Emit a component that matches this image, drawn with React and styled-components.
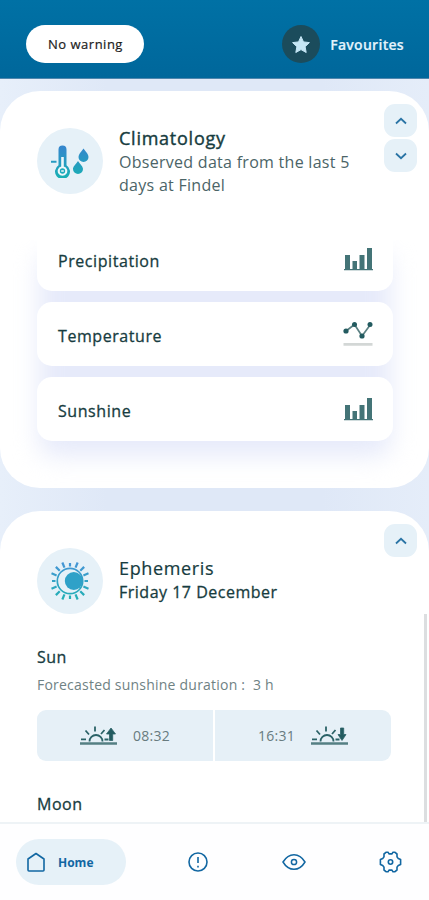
import React from "react";
import styled, { createGlobalStyle } from "styled-components";

const GlobalStyle = createGlobalStyle`
  * { box-sizing: border-box; }
  html, body { margin: 0; height: 100%; overflow: hidden; }
  body { font-family: "Open Sans", "Noto Sans", sans-serif; color: #173c40; }
  svg { display: block; flex: none; }
`;

const Screen = styled.div`
  width: 429px;
  height: 900px;
  display: flex;
  flex-direction: column;
  overflow: hidden;
  background: #fff;
`;

const Header = styled.header`
  flex: none;
  height: 79px;
  padding: 10px 25px 0 26px;
  display: flex;
  align-items: center;
  justify-content: space-between;
  background: linear-gradient(#0071a5, #00679b);
  border-bottom: 1px solid #4f86ad;
`;

const WarningPill = styled.button`
  width: 118px;
  height: 38px;
  padding: 0 0 0 1px;
  border: 0;
  border-radius: 19px;
  background: #fff;
  color: #1c1c1c;
  font: 500 13px/38px "Open Sans", sans-serif;
  letter-spacing: 0.5px;
  -webkit-text-stroke: 0.2px currentColor;
`;

const Favourites = styled.div`
  display: flex;
  align-items: center;
  gap: 10px;
  color: #e3f3fc;
  font-size: 14px;
  font-weight: 600;
  letter-spacing: 0.3px;
  -webkit-text-stroke: 0.2px currentColor;
`;

const StarBadge = styled.span`
  width: 38px;
  height: 38px;
  border-radius: 50%;
  display: grid;
  place-items: center;
  background: #1b4c5c;
`;

const Feed = styled.main`
  flex: 1;
  min-height: 0;
  padding-top: 12px;
  display: flex;
  flex-direction: column;
  gap: 23px;
  overflow: hidden;
  background: linear-gradient(90deg, #e7effa, #dfe8f7 25%, #dfe8f7 75%, #e5edf9);
`;

const Card = styled.section`
  flex: none;
  height: ${(p) => p.$height}px;
  border-radius: ${(p) => (p.$open ? "40px 40px 0 0" : "40px")};
  background: #fff;
  overflow: hidden;
`;

const CardHead = styled.div`
  height: ${(p) => p.$height}px;
  padding: 13px 12px 0 37px;
  display: flex;
  align-items: flex-start;
`;

const IconDisc = styled.div`
  width: 66px;
  height: 66px;
  margin-top: 24px;
  border-radius: 50%;
  display: grid;
  place-items: center;
  background: #e6f1f8;
`;

const Titles = styled.div`
  flex: 1;
  padding: ${(p) => p.$top}px 0 0 16px;
`;

const Title = styled.h2`
  margin: 0;
  font-size: 18px;
  line-height: 25px;
  font-weight: 500;
  letter-spacing: ${(p) => p.$track || 0}px;
  -webkit-text-stroke: ${(p) => p.$stroke}px currentColor;
`;

const Subtitle = styled.p`
  margin: 0;
  font-size: 16px;
  line-height: 23px;
  font-weight: ${(p) => (p.$strong ? 500 : 400)};
  color: ${(p) => (p.$strong ? "#173c40" : "#4b6467")};
  letter-spacing: ${(p) => p.$track || 0}px;
  -webkit-text-stroke: ${(p) => (p.$strong ? 0.3 : 0)}px currentColor;
  white-space: nowrap;
`;

const Steppers = styled.div`
  display: flex;
  flex-direction: column;
  gap: 2px;
`;

const StepButton = styled.button`
  width: 33px;
  height: 33px;
  padding: 0;
  border: 0;
  border-radius: 11px;
  display: grid;
  place-items: center;
  background: #e6f1f8;
`;

const ListViewport = styled.div`
  height: 248px;
  overflow: hidden;
  display: flex;
  flex-direction: column;
  justify-content: flex-end;
  padding: 0 36px 47px 37px;
`;

const RowList = styled.div`
  flex: none;
  display: flex;
  flex-direction: column;
  gap: 11px;
  position: relative;
  isolation: isolate;

  &::before {
    content: "";
    position: absolute;
    z-index: -1;
    inset: 26px 2px -15px;
    border-radius: 15px;
    background: #e6eafa;
    filter: blur(12px);
  }
`;

const Row = styled.div`
  height: 64px;
  padding: 0 20px 0 21px;
  display: flex;
  align-items: center;
  justify-content: space-between;
  border-radius: 15px;
  background: #fff;
`;

const RowLabel = styled.span`
  padding-top: 4px;
  font-size: 16px;
  font-weight: 500;
  letter-spacing: 0.57px;
  -webkit-text-stroke: 0.3px currentColor;
`;

const Details = styled.div`
  display: flex;
`;

const DetailBody = styled.div`
  flex: 1;
  padding: 31px 0 0 37px;
`;

const ScrollThumb = styled.div`
  width: 3px;
  height: 210px;
  margin-right: 2px;
  background: #dcdee0;
`;

const SectionName = styled.h3`
  margin: 0;
  font-size: 16px;
  line-height: 24px;
  font-weight: 500;
  letter-spacing: 0.5px;
  -webkit-text-stroke: 0.3px currentColor;
`;

const Forecast = styled.p`
  margin: 7px 0 16px;
  font-size: 14px;
  line-height: 18px;
  color: #6f8284;
  white-space: pre;
  letter-spacing: 0.22px;
`;

const Times = styled.div`
  width: 354px;
  height: 51px;
  margin-bottom: 31px;
  display: grid;
  grid-template-columns: 176px 176px;
  gap: 2px;
  border-radius: 9px;
  overflow: hidden;
`;

const TimeCell = styled.div`
  display: flex;
  align-items: center;
  justify-content: center;
  gap: 16px;
  background: #e6f0f7;
  color: #687b7f;
  font-size: 14px;
  letter-spacing: 0.3px;
`;

const Nav = styled.nav`
  flex: none;
  height: 78px;
  padding: 0 27px 0 16px;
  display: flex;
  align-items: center;
  justify-content: space-between;
  border-top: 2px solid #eef3f6;
  background: #fefeff;
  color: #1267a2;
`;

const Shortcuts = styled.div`
  width: 215px;
  display: flex;
  align-items: center;
  justify-content: space-between;
`;

const HomeTab = styled.a`
  width: 110px;
  height: 46px;
  padding-left: 9px;
  display: flex;
  align-items: center;
  gap: 11px;
  border-radius: 23px;
  background: #e6f1f8;
  font-size: 12px;
  font-weight: 700;
`;

const Chevron = ({ down }) => (
  <svg width="12" height="8" viewBox="0 0 12 8" fill="none" stroke="#2a74a5" strokeWidth="1.8">
    <path d={down ? "M1 1.5L6 6.2L11 1.5" : "M1 6.5L6 1.8L11 6.5"} />
  </svg>
);

const Bars = () => (
  <svg width="29" height="24" viewBox="0 0 29 24" fill="#447477">
    <path d="M1 8h5v14H1zM8.500 14h4.500v8h-4.500zM15.500 8h5v14h-5zM23 1h5v21h-5zM0 22h29v1.200H0z" />
  </svg>
);

const Line = () => (
  <svg width="30" height="26" viewBox="0 0 30 26">
    <path d="M3 10L11.500 3.500L19 15L27.500 3.500" fill="none" stroke="#5b8082" strokeWidth="1.700" />
    <g fill="#235b60">
      <circle cx="3" cy="10" r="2.600" />
      <circle cx="11.500" cy="3.500" r="2.500" />
      <circle cx="19" cy="15" r="2.600" />
      <circle cx="27" cy="3.500" r="2.500" />
    </g>
    <path d="M.5 22h29v2.800H.5z" fill="#d3d7d6" />
  </svg>
);

const Thermometer = () => (
  <svg width="38" height="34" viewBox="0 0 38 34">
    <defs>
      <linearGradient id="climate" x1="0" y1="0" x2="0" y2="34" gradientUnits="userSpaceOnUse">
        <stop offset="0.1" stopColor="#3587cd" />
        <stop offset="1" stopColor="#18b0b4" />
      </linearGradient>
    </defs>
    <g fill="url(#climate)">
      <path d="M7.500 5.500a4 4 0 0 1 8 0v15.700a7.500 7.500 0 1 1-8 0z" />
      <path d="M0 16.800h5.500v2H0z" />
      <path d="M32.500 4.500c3 4 5 6 5 8.500a5 5 0 0 1-10 0c0-2.500 2-4.500 5-8.500z" />
      <path d="M27 17c3 4 5 5.800 5 8a5 5 0 0 1-10 0c0-2.200 2-4 5-8z" />
    </g>
    <path d="M10.200 13h2.600v9.400a4.800 4.800 0 1 1-2.600 0z" fill="#eef7fa" />
    <circle cx="11.500" cy="27" r="2.700" fill="#1da9bb" />
    <path d="M10.200 26.300h2.600v1.400h-2.600z" fill="#eef7fa" />
  </svg>
);

const Eclipse = () => (
  <svg width="40" height="40" viewBox="-20 -20 40 40">
    <defs>
      <linearGradient id="eclipse" x1="0" y1="-19" x2="0" y2="19" gradientUnits="userSpaceOnUse">
        <stop offset="0" stopColor="#4594d6" />
        <stop offset="1" stopColor="#22b0b4" />
      </linearGradient>
    </defs>
    <circle r="12.700" fill="none" stroke="url(#eclipse)" strokeWidth="1.700" />
    <circle cx="3.800" r="9" fill="#2fa1c8" />
    <g stroke="url(#eclipse)" strokeWidth="2.200">
      {Array.from({ length: 16 }, (_, i) => {
        const a = ((i * 360) / 16) * (Math.PI / 180);
        const s = Math.sin(a);
        const c = -Math.cos(a);
        const end = i % 4 === 0 ? 18 : 20;
        return <line key={i} x1={s * 14.5} y1={c * 14.5} x2={s * end} y2={c * end} />;
      })}
    </g>
  </svg>
);

const SunHorizon = ({ down }) => (
  <svg width="37" height="20" viewBox="0 0 37 20" fill="none" stroke="#2b6267" strokeWidth="1.800">
    <path d="M9.500 15.500a6.500 6.500 0 0 1 13 0M1 13.300h5M5.500 4.500l3.500 4M15 .5v5M24.500 4L21 8M24.500 13.500h4" />
    <path d="M0 17.500h37" stroke="#547f83" strokeWidth="2.500" />
    <path
      d={down ? "M29.500 2h3.200v6.500H35L31 14.500L27 8.500h2.500z" : "M29.500 14.500h3.200V8H35.500L31 2L26.500 8h3z"}
      fill="#235b60"
      strokeWidth=".8"
    />
  </svg>
);

const Star = () => (
  <svg width="20" height="19" viewBox="0 0 20 19" fill="#c5e6f5" stroke="#c5e6f5" strokeLinejoin="round">
    <path d="M10 1.500l2.500 5.400 5.900.7-4.300 4.100 1.100 5.800L10 14.600l-5.200 2.900 1.100-5.800L1.600 7.600l5.900-.7z" />
  </svg>
);

const HomeIcon = () => (
  <svg width="22" height="20" viewBox="0 0 22 20" fill="none" stroke="currentColor" strokeWidth="1.600" strokeLinejoin="round">
    <path d="M11 1.500L19 7v11a1 1 0 0 1-1 1H4a1 1 0 0 1-1-1V7z" />
  </svg>
);

const AlertIcon = () => (
  <svg width="22" height="22" viewBox="0 0 22 22" fill="none" stroke="currentColor" strokeWidth="1.600">
    <circle cx="11" cy="11" r="9" />
    <path d="M11 6v6M11 14.800v1.700" />
  </svg>
);

const EyeIcon = () => (
  <svg width="24" height="18" viewBox="0 0 24 18" fill="none" stroke="currentColor" strokeWidth="1.500">
    <path d="M1 9C4 4 7.500 1.700 12 1.700S20 4 23 9C20 14 16.500 16.300 12 16.300S4 14 1 9z" />
    <circle cx="12" cy="9" r="2.600" />
  </svg>
);

const GearIcon = () => (
  <svg width="23" height="22" viewBox="0 0 23 22" fill="none" stroke="currentColor" strokeWidth="1.600" strokeLinejoin="round">
    <path d="M7.300 1.200H9L10 2.900H13L14 1.200H15.700L18 3V5.800L19.300 7.600L21.600 8.600V13.400L19.300 14.400L18 16.200V19L15.700 20.800H14L13 19.100H10L9 20.800H7.300L5 19V16.200L3.700 14.400L1.400 13.400V8.600L3.700 7.600L5 5.800V3z" />
    <circle cx="11.500" cy="11" r="2.200" />
  </svg>
);

const rows = [
  { label: "Precipitation", icon: <Bars /> },
  { label: "Temperature", icon: <Line /> },
  { label: "Sunshine", icon: <Bars /> },
];

export default function App() {
  return (
    <Screen>
      <GlobalStyle />
      <Header>
        <WarningPill>No warning</WarningPill>
        <Favourites>
          <StarBadge><Star /></StarBadge>
          <span>Favourites</span>
        </Favourites>
      </Header>
      <Feed>
        <Card $height={397}>
          <CardHead $height={149}>
            <IconDisc><Thermometer /></IconDisc>
            <Titles $top={22}>
              <Title $track={0.75} $stroke={0.4}>Climatology</Title>
              <Subtitle $track={0.28}>Observed data from the last 5<br />days at Findel</Subtitle>
            </Titles>
            <Steppers>
              <StepButton aria-label="Move up"><Chevron /></StepButton>
              <StepButton aria-label="Move down"><Chevron down /></StepButton>
            </Steppers>
          </CardHead>
          <ListViewport>
            <RowList>
              {rows.map((r) => (
                <Row key={r.label}>
                  <RowLabel>{r.label}</RowLabel>
                  {r.icon}
                </Row>
              ))}
            </RowList>
          </ListViewport>
        </Card>
        <Card $height={420} $open>
          <CardHead $height={103}>
            <IconDisc><Eclipse /></IconDisc>
            <Titles $top={32}>
              <Title $track={0.65} $stroke={0.2}>Ephemeris</Title>
              <Subtitle $strong $track={0.5}>Friday 17 December</Subtitle>
            </Titles>
            <StepButton aria-label="Move up"><Chevron /></StepButton>
          </CardHead>
          <Details>
            <DetailBody>
              <SectionName>Sun</SectionName>
              <Forecast>{"Forecasted sunshine duration :  3 h"}</Forecast>
              <Times>
                <TimeCell><SunHorizon /><span>08:32</span></TimeCell>
                <TimeCell><span>16:31</span><SunHorizon down /></TimeCell>
              </Times>
              <SectionName>Moon</SectionName>
            </DetailBody>
            <ScrollThumb />
          </Details>
        </Card>
      </Feed>
      <Nav>
        <HomeTab><HomeIcon /><span>Home</span></HomeTab>
        <Shortcuts>
          <AlertIcon />
          <EyeIcon />
          <GearIcon />
        </Shortcuts>
      </Nav>
    </Screen>
  );
}
